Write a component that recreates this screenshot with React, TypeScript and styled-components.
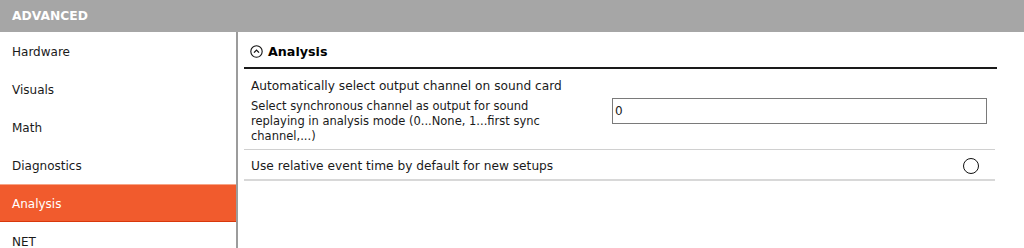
import styled, { createGlobalStyle } from "styled-components";

const Global = createGlobalStyle`
  html, body {
    margin: 0;
    padding: 0;
    background: #ffffff;
    overflow: hidden;
  }
  body {
    font-family: "DejaVu Sans", Verdana, sans-serif;
    color: #1a1a1a;
  }
`;

const sections = ["Hardware", "Visuals", "Math", "Diagnostics", "Analysis", "NET"];

export default function App() {
  return (<>
    <Global />
    <Page>
      <TopBar>ADVANCED</TopBar>
      <Body>
        <Sidebar>
          {sections.map((s) => (
            <NavItem key={s} $active={s === "Analysis"}>{s}</NavItem>
          ))}
        </Sidebar>
        <Content>
          <SectionHead>
            <svg width="13" height="13" viewBox="0 0 13 13">
              <circle cx="6.5" cy="6.5" r="5.7" fill="none" stroke="#111" strokeWidth="1.1" />
              <path d="M4 7.6 L6.5 5.1 L9 7.6" fill="none" stroke="#111" strokeWidth="1.3" />
            </svg>
            <span>Analysis</span>
          </SectionHead>
          <Row $tall>
            <LabelCol>
              <Label>Automatically select output channel on sound card</Label>
              <Hint>
                Select synchronous channel as output for sound replaying in analysis mode (0...None, 1...first sync channel,...)
              </Hint>
            </LabelCol>
            <ValueCol>
              <TextBox defaultValue="0" />
            </ValueCol>
          </Row>
          <Row>
            <LabelCol>
              <Label>Use relative event time by default for new setups</Label>
            </LabelCol>
            <ValueCol $end>
              <Radio />
            </ValueCol>
          </Row>
        </Content>
      </Body>
    </Page>
  </>);
}

const Page = styled.div`
  width: 1024px;
  height: 248px;
  display: flex;
  flex-direction: column;
  overflow: hidden;
`;

const TopBar = styled.div`
  height: 32px;
  flex: none;
  display: flex;
  align-items: center;
  padding-left: 12px;
  background: #a6a6a6;
  color: #ffffff;
  font-size: 12.3px;
  font-weight: bold;
`;

const Body = styled.div`
  display: flex;
  flex: 1;
  min-height: 0;
`;

const Sidebar = styled.div`
  width: 236px;
  flex: none;
  border-right: 2px solid #9c9c9c;
  display: flex;
  flex-direction: column;
`;

const NavItem = styled.div<{ $active?: boolean }>`
  height: 38px;
  flex: none;
  box-sizing: border-box;
  display: flex;
  align-items: center;
  padding: 1px 0 0 12px;
  font-size: 12px;
  color: ${(p) => (p.$active ? "#ffffff" : "#1a1a1a")};
  background: ${(p) => (p.$active ? "#f15b2d" : "transparent")};
  border-top: 1px solid ${(p) => (p.$active ? "#f7a486" : "transparent")};
  border-bottom: 1px solid ${(p) => (p.$active ? "#d8380c" : "transparent")};
`;

const Content = styled.div`
  width: 753px;
  padding-left: 6px;
  display: flex;
  flex-direction: column;
`;

const SectionHead = styled.div`
  height: 37px;
  flex: none;
  box-sizing: border-box;
  display: flex;
  align-items: center;
  gap: 5px;
  padding: 3px 0 0 6px;
  border-bottom: 2px solid #1a1a1a;
  font-size: 12.7px;
  font-weight: bold;
  color: #000;
`;

const Row = styled.div<{ $tall?: boolean }>`
  display: flex;
  align-items: center;
  margin-right: 2px;
  padding: ${(p) => (p.$tall ? "9px 0 5px" : "8px 0 5px")};
  border-bottom: ${(p) => (p.$tall ? "1px solid #d0d0d0" : "2px solid #d8d8d8")};
`;

const LabelCol = styled.div`
  width: 360px;
  flex: none;
  padding-left: 7px;
  box-sizing: border-box;
`;

const Label = styled.div`
  font-size: 12.2px;
  line-height: 16px;
  white-space: nowrap;
`;

const Hint = styled.div`
  margin-top: 4.5px;
  width: 300px;
  font-size: 11.5px;
  line-height: 15px;
`;

const ValueCol = styled.div<{ $end?: boolean }>`
  flex: 1;
  display: flex;
  justify-content: ${(p) => (p.$end ? "flex-end" : "flex-start")};
  padding-right: ${(p) => (p.$end ? "16px" : "0")};
`;

const TextBox = styled.input`
  width: 375px;
  height: 26px;
  box-sizing: border-box;
  margin-left: 8px;
  border: 1px solid #7a7a7a;
  padding: 0 3px 0 2px;
  font-family: "DejaVu Sans", Verdana, sans-serif;
  font-size: 12px;
  color: #222;
  outline: none;
`;

const Radio = styled.div`
  width: 14px;
  height: 14px;
  border: 1.5px solid #111;
  border-radius: 50%;
`;
